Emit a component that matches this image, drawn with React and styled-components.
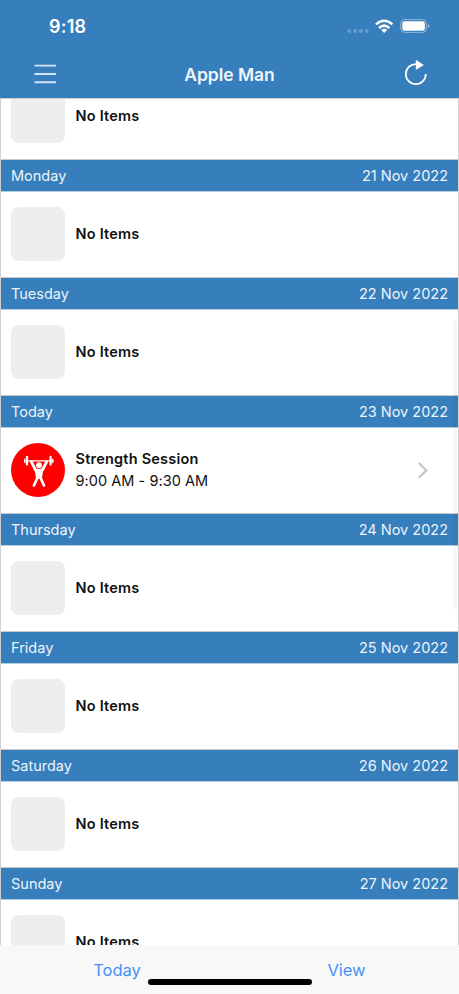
import React from "react";
import styled, { createGlobalStyle } from "styled-components";

const Global = createGlobalStyle`
  * { box-sizing: border-box; }
  body { margin: 0; background: #fff; }
`;

const Screen = styled.div`
  width: 459px;
  height: 994px;
  display: flex;
  flex-direction: column;
  overflow: hidden;
  background: #fff;
  font-family: Inter, "Liberation Sans", sans-serif;
  color: #111;
`;

const TopArea = styled.header`
  flex: 0 0 98px;
  background: #377ebc;
  color: #fff;
`;

const StatusBar = styled.div`
  height: 52px;
  padding: 1px 29px 0 49px;
  display: flex;
  align-items: center;
  justify-content: space-between;
`;

const Clock = styled.span`
  font-size: 18px;
  font-weight: 600;
  letter-spacing: 0.25px;
`;

const StatusIcons = styled.svg`
  display: block;
  width: 84px;
  height: 20px;
`;

const NavBar = styled.div`
  height: 44px;
  padding: 0 30px 0 33px;
  display: grid;
  grid-template-columns: 26px 1fr 26px;
  align-items: center;
`;

const Title = styled.h1`
  margin: 0;
  padding: 1px 3px 0 0;
  text-align: center;
  font-size: 17.5px;
  line-height: 24px;
  font-weight: 600;
  letter-spacing: -0.05px;
  color: #f1f6fa;
`;

const IconButton = styled.button`
  border: 0;
  padding: 0;
  width: 26px;
  height: 30px;
  background: none;
  svg { display: block; }
`;

const Viewport = styled.main`
  flex: 1;
  min-height: 0;
  overflow: hidden;
  position: relative;
  border: 1px solid #d0d0d0;
  border-bottom: 0;
`;

const List = styled.div`
  margin-top: -26px;
`;

const DayHeader = styled.div`
  height: 33px;
  margin-bottom: -1px;
  padding: 0 10px;
  display: flex;
  align-items: center;
  justify-content: space-between;
  border-top: 1px solid #c8c8c8;
  border-bottom: 1px solid #b4cce0;
  background: #377ebc;
  color: #edf4f9;
  font-size: 14.5px;
`;

const DayName = styled.span`
  white-space: nowrap;
`;

const DayDate = styled.span`
  white-space: nowrap;
`;

const Row = styled.div`
  height: 86px;
  padding: 0 29px 0 10px;
  display: flex;
  align-items: center;
`;

const Thumb = styled.div`
  width: 54px;
  height: 54px;
  margin-right: 10.5px;
  border-radius: ${(p) => (p.$round ? "50%" : "8px")};
  background: ${(p) => (p.$round ? "#fe0000" : "#eee")};
  svg { display: block; }
`;

const Texts = styled.div`
  flex: 1;
  font-size: 14.5px;
  line-height: 22px;
`;

const RowTitle = styled.div`
  font-weight: 600;
  letter-spacing: 0.22px;
`;

const RowTime = styled.div`
  letter-spacing: 0.05px;
`;

const ScrollThumb = styled.div`
  position: absolute;
  right: 1px;
  top: 222px;
  width: 4px;
  height: 288px;
  border-radius: 2px;
  background: rgba(0, 0, 0, 0.035);
`;

const TabBar = styled.footer`
  flex: 0 0 49px;
  position: relative;
  display: grid;
  grid-template-columns: 234px 225px;
  background: #f8f8f8;
`;

const TabButton = styled.button`
  border: 0;
  padding: 1px 0 0;
  background: none;
  color: #4690fb;
  font-family: inherit;
  font-size: 16.5px;
  letter-spacing: -0.05px;
  text-align: center;
`;

const HomeIndicator = styled.div`
  position: absolute;
  left: 148px;
  top: 34px;
  width: 164px;
  height: 6px;
  border-radius: 3px;
  background: #000;
`;

const days = [
  { name: "Monday", date: "21 Nov 2022" },
  { name: "Tuesday", date: "22 Nov 2022" },
  { name: "Today", date: "23 Nov 2022", session: { title: "Strength Session", time: "9:00 AM - 9:30 AM" } },
  { name: "Thursday", date: "24 Nov 2022" },
  { name: "Friday", date: "25 Nov 2022" },
  { name: "Saturday", date: "26 Nov 2022" },
  { name: "Sunday", date: "27 Nov 2022" },
];

const Lifter = () => (
  <svg width="54" height="54" viewBox="0 0 54 54" fill="none" stroke="#fff" strokeLinecap="round" strokeLinejoin="round">
    <path d="M13.5 17.8H42" strokeWidth="1.3" />
    <path d="M16 14V21.6M39.6 14V21.6" strokeWidth="2.3" />
    <path d="M13.8 16V19.6M41.8 16V19.6" strokeWidth="1.2" />
    <circle cx="28" cy="22.2" r="2.9" fill="#fff" stroke="none" />
    <path d="M20.4 18.8L24.6 27.2M35.6 18.8L31.4 27.2" strokeWidth="2.9" />
    <path d="M24.4 26.3H31.6L30.4 35H25.6Z" fill="#fff" strokeWidth="1.3" />
    <path d="M26.8 34L22.9 42.5M29.2 34L33 42.5" strokeWidth="2.7" />
  </svg>
);

const Chevron = () => (
  <svg width="12" height="18" viewBox="0 0 12 18" fill="none" stroke="#c4c4c7" strokeWidth="2.2">
    <path d="M1.8 2L9.4 9.4L1.8 16.8" />
  </svg>
);

const ItemRow = ({ session }) => (
  <Row>
    <Thumb $round={!!session}>{session && <Lifter />}</Thumb>
    <Texts>
      <RowTitle>{session ? session.title : "No Items"}</RowTitle>
      {session && <RowTime>{session.time}</RowTime>}
    </Texts>
    {session && <Chevron />}
  </Row>
);

export default function App() {
  return (
    <Screen>
      <Global />
      <TopArea>
        <StatusBar>
          <Clock>9:18</Clock>
          <StatusIcons viewBox="346 17 84 20" fill="none">
            <g fill="#fff" opacity="0.25">
              <circle cx="349.3" cy="31" r="1.9" />
              <circle cx="355.1" cy="31" r="1.9" />
              <circle cx="360.9" cy="31" r="1.9" />
              <circle cx="366.7" cy="31" r="1.9" />
            </g>
            <g stroke="#fff" strokeWidth="2.5">
              <path d="M376 24.4Q384.2 17 392.4 24.4" />
              <path d="M379 28Q384.2 23.2 389.4 28" />
            </g>
            <path d="M381.2 29.9Q384.2 27.5 387.2 29.9L384.2 33Z" fill="#fff" />
            <rect x="400.7" y="19.6" width="25.8" height="12.8" rx="4" stroke="#fff" strokeOpacity=".45" />
            <rect x="402.3" y="21.2" width="22.6" height="9.6" rx="2.5" fill="#fff" />
            <path d="M428 24V28.3Q430.8 26.1 428 24Z" fill="#fff" opacity=".5" />
          </StatusIcons>
        </StatusBar>
        <NavBar>
          <IconButton aria-label="Menu">
            <svg width="26" height="30" viewBox="33 59 26 30" stroke="#fff" strokeOpacity=".8" strokeWidth="1.9">
              <path d="M34.5 65.6H56M34.5 74H56M34.5 82.3H56" />
            </svg>
          </IconButton>
          <Title>Apple Man</Title>
          <IconButton aria-label="Refresh">
            <svg width="26" height="30" viewBox="403 59 26 30" fill="none">
              <path d="M416 64.1A10 10 0 1 0 425.8 74" stroke="#fff" strokeWidth="1.8" />
              <path d="M415.8 59.8L423.8 65L415.8 70Z" fill="#fff" />
            </svg>
          </IconButton>
        </NavBar>
      </TopArea>
      <Viewport>
        <List>
          <ItemRow />
          {days.map((d) => (
            <React.Fragment key={d.name}>
              <DayHeader>
                <DayName>{d.name}</DayName>
                <DayDate>{d.date}</DayDate>
              </DayHeader>
              <ItemRow session={d.session} />
            </React.Fragment>
          ))}
        </List>
        <ScrollThumb />
      </Viewport>
      <TabBar>
        <TabButton>Today</TabButton>
        <TabButton>View</TabButton>
        <HomeIndicator />
      </TabBar>
    </Screen>
  );
}
